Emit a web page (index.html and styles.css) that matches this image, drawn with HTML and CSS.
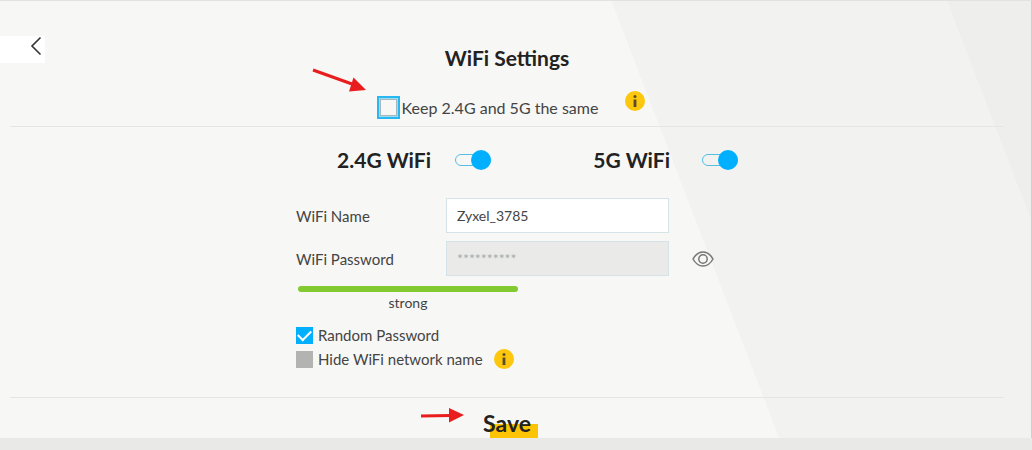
FILE: index.html
```html
<!DOCTYPE html>
<html lang="en">
<head>
<meta charset="utf-8">
<meta name="viewport" content="width=device-width, initial-scale=1">
<title>WiFi Settings</title>
<link rel="stylesheet" href="styles.css">
</head>
<body>
<main class="panel">
  <button class="back" type="button" aria-label="Back">
    <svg width="12" height="20" viewBox="0 0 12 20" fill="none" stroke="#333" stroke-width="1.6"><path d="M10.500 1.500 2 10l8.500 8.500"/></svg>
  </button>
  <form class="settings">
    <header class="top">
      <h1 class="title">WiFi Settings</h1>
      <div class="keep">
        <input class="box box-focus" type="checkbox" id="keep">
        <label class="keep-label" for="keep">Keep 2.4G and 5G the same</label>
        <button class="info info-keep" type="button" aria-label="About keeping both the same">
          <svg width="20" height="20" viewBox="0 0 20 20"><circle cx="10" cy="10" r="10" fill="#fcc70c"/><circle cx="10" cy="5.500" r="1.500" fill="#574d2c"/><path d="M8.600 8.500h2.800v7.500h-2.800z" fill="#574d2c"/></svg>
        </button>
      </div>
    </header>
    <section class="body">
      <div class="bands">
        <div class="band"><label class="band-name" for="band24">2.4G WiFi</label><input class="switch" type="checkbox" role="switch" id="band24" checked></div>
        <div class="band band-wide"><label class="band-name" for="band5">5G WiFi</label><input class="switch" type="checkbox" role="switch" id="band5" checked></div>
      </div>
      <div class="fields">
        <label for="name">WiFi Name</label>
        <input class="text" type="text" id="name" value="Zyxel_3785">
        <span></span>
        <label for="password">WiFi Password</label>
        <input class="text" type="text" id="password" value="**********" disabled>
        <button class="eye" type="button" aria-label="Show password">
          <svg width="22" height="16" viewBox="0 0 22 16" fill="none" stroke="#777" stroke-width="1.500"><path d="M1 8C3.500 3.500 7 1 11 1s7.500 2.500 10 7c-2.500 4.500-6 7-10 7S3.500 12.500 1 8Z"/><circle cx="11" cy="8" r="4.200"/></svg>
        </button>
      </div>
      <div class="strength"><div class="bar"></div><span>strong</span></div>
      <div class="options">
        <div class="option"><input class="box" type="checkbox" id="random" checked><label for="random">Random Password</label></div>
        <div class="option"><input class="box" type="checkbox" id="hide"><label for="hide">Hide WiFi network name</label>
          <button class="info" type="button" aria-label="About hiding the network name">
            <svg width="20" height="20" viewBox="0 0 20 20"><circle cx="10" cy="10" r="10" fill="#fcc70c"/><circle cx="10" cy="5.500" r="1.500" fill="#574d2c"/><path d="M8.600 8.500h2.800v7.500h-2.800z" fill="#574d2c"/></svg>
          </button>
        </div>
      </div>
    </section>
    <footer class="foot"><button class="save" type="submit">Save</button></footer>
    <svg class="arrow arrow-keep" width="56" height="28" viewBox="0 0 56 28" aria-hidden="true"><path d="M1 2 40 16" stroke="#e91d1d" stroke-width="3"/><path d="M41.500 9.500 54 22 37 23.500z" fill="#e91d1d"/></svg>
    <svg class="arrow arrow-save" width="44" height="16" viewBox="0 0 44 16" aria-hidden="true"><path d="M1 9 30 8.500" stroke="#e91d1d" stroke-width="3"/><path d="M29 1 44 8 29 15.500z" fill="#e91d1d"/></svg>
  </form>
</main>
</body>
</html>
```
FILE: styles.css
```css
* { box-sizing: border-box; }

body {
  margin: 0;
  background: #e9e9e7;
  color: #444;
  font: 16px/20px "Century Gothic", Lato, sans-serif;
}

button {
  padding: 0;
  border: 0;
  background: none;
  color: inherit;
  font: inherit;
  cursor: pointer;
}

svg { display: block; }

.panel {
  position: relative;
  padding: 0 27px 0 10px;
  border-top: 1px solid #e2e2e1;
  border-right: 1px solid #cfcfcf;
  background: linear-gradient(69deg, #f7f7f5 65%, #f2f2f0 65%, #f2f2f0 93%, #eeeeec 93%);
  box-shadow: 0 1px 4px #b8b8b8;
}

.back {
  position: absolute;
  top: 35px;
  left: 0;
  display: flex;
  justify-content: flex-end;
  width: 45px;
  height: 27px;
  padding-right: 3px;
  background: #fff;
}

.settings { position: relative; }

.top {
  display: flex;
  flex-direction: column;
  align-items: center;
  gap: 26px;
  padding: 45px 0 7px;
  border-bottom: 1px solid #e5e5e4;
}

.title {
  margin: 0;
  color: #222;
  font-size: 21px;
  line-height: 24px;
}

.keep {
  display: flex;
  align-items: center;
  padding-left: 8px;
}

.keep-label { padding-left: 2px; }

.info-keep {
  margin: -14px 0 0 27px;
}

.box {
  display: grid;
  place-items: center;
  width: 17px;
  height: 17px;
  margin: 0;
  appearance: none;
  background: #b3b3b2;
}

.box:checked { background: #00b0ff; }

.box:checked::after {
  width: 11px;
  height: 6px;
  margin-top: -3px;
  border: solid #fff;
  border-width: 0 0 2px 2px;
  content: "";
  transform: rotate(-45deg);
}

.box-focus {
  width: 23px;
  height: 23px;
  border: 2px solid #27b8f2;
  background: #f7f7f5;
  box-shadow: inset 0 0 0 1px #9edcf2, inset 0 0 0 2px #a5b6bc;
}

.body {
  width: 422px;
  max-width: 100%;
  margin: 0 auto;
  padding: 21px 0 28px;
}

.bands {
  display: grid;
  grid-template-columns: 1fr 1fr;
  margin: 0 -20px 26px -52px;
}

.band {
  display: flex;
  justify-content: flex-end;
  align-items: center;
  gap: 24px;
}

.band-wide { gap: 32px; }

.band-name {
  color: #222;
  font-size: 21px;
  font-weight: 700;
  line-height: 24px;
}

.switch {
  position: relative;
  width: 36px;
  height: 12px;
  margin: 0;
  border: 1px solid #55bfe3;
  border-radius: 6px;
  appearance: none;
}

.switch::after {
  position: absolute;
  top: -5px;
  right: -1px;
  width: 20px;
  height: 20px;
  border-radius: 50%;
  background: #00b0ff;
  content: "";
}

.fields {
  display: grid;
  grid-template-columns: 150px 223px 1fr;
  gap: 8px 0;
  align-items: center;
  font-size: 15px;
}

.text {
  width: 100%;
  height: 35px;
  padding: 0 10px;
  border: 1px solid #d5e3e8;
  border-radius: 0;
  background: #fff;
  color: #444;
  font: inherit;
  font-size: 14px;
}

.text:disabled {
  background: #eaeae8;
  color: #aaa;
}

.eye { justify-self: end; padding-right: 4px; }

.strength {
  width: 220px;
  margin: 10px 0 0 2px;
  font-size: 14px;
  text-align: center;
}

.bar {
  height: 6px;
  margin-bottom: 1px;
  border-radius: 3px;
  background: #82ca30;
}

.options {
  display: grid;
  gap: 4px;
  margin-top: 12px;
  font-size: 15px;
}

.option {
  display: flex;
  align-items: center;
  gap: 5px;
}

.option .info { margin-left: 6px; }

.foot {
  display: flex;
  justify-content: center;
  padding-top: 12px;
  border-top: 1px solid #e5e5e4;
}

.save {
  position: relative;
  z-index: 0;
  height: 28px;
  padding-bottom: 2px;
  color: #222;
  font-size: 23px;
  font-weight: 700;
  line-height: 26px;
}

.save::before {
  position: absolute;
  z-index: -1;
  right: -7px;
  bottom: 0;
  width: 48px;
  height: 14px;
  background: #fcc404;
  content: "";
}

.arrow {
  position: absolute;
  pointer-events: none;
}

.arrow-keep {
  top: 67px;
  left: calc(50% - 195px);
}

.arrow-save {
  bottom: 15px;
  left: calc(50% - 87px);
}
```
